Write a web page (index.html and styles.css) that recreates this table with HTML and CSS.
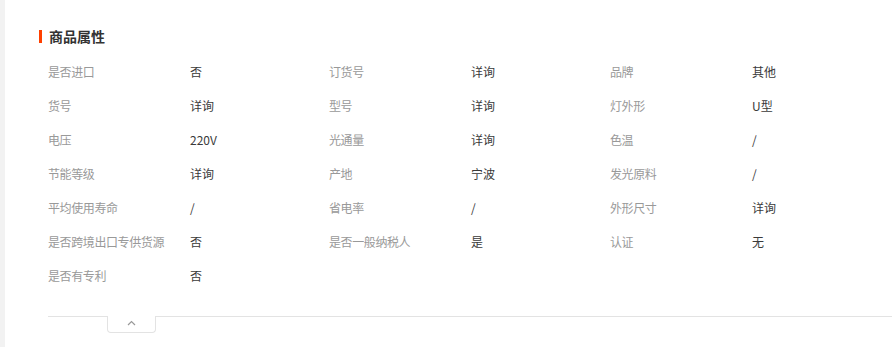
FILE: index.html
```html
<!DOCTYPE html>
<html lang="zh">
<head>
<meta charset="utf-8">
<link rel="stylesheet" href="styles.css">
</head>
<body>
<div class="page">
  <div class="strip"></div>
  <section class="attrs">
    <h2 class="title"><span class="bar"></span>商品属性</h2>
    <div class="grid">
      <div class="k">是否进口</div><div class="v">否</div>
      <div class="k">订货号</div><div class="v">详询</div>
      <div class="k">品牌</div><div class="v">其他</div>

      <div class="k">货号</div><div class="v">详询</div>
      <div class="k">型号</div><div class="v">详询</div>
      <div class="k">灯外形</div><div class="v">U型</div>

      <div class="k">电压</div><div class="v">220V</div>
      <div class="k">光通量</div><div class="v">详询</div>
      <div class="k">色温</div><div class="v">/</div>

      <div class="k">节能等级</div><div class="v">详询</div>
      <div class="k">产地</div><div class="v">宁波</div>
      <div class="k">发光原料</div><div class="v">/</div>

      <div class="k">平均使用寿命</div><div class="v">/</div>
      <div class="k">省电率</div><div class="v">/</div>
      <div class="k">外形尺寸</div><div class="v">详询</div>

      <div class="k">是否跨境出口专供货源</div><div class="v">否</div>
      <div class="k">是否一般纳税人</div><div class="v">是</div>
      <div class="k">认证</div><div class="v">无</div>

      <div class="k">是否有专利</div><div class="v">否</div>
    </div>
    <div class="fold">
      <div class="line short"></div>
      <div class="tab">
        <svg width="9" height="6" viewBox="0 0 9 6"><path d="M1 5 L4.5 1.5 L8 5" fill="none" stroke="#999" stroke-width="1.2"/></svg>
      </div>
      <div class="line"></div>
    </div>
  </section>
</div>
</body>
</html>
```
FILE: styles.css
```css
html, body {
  margin: 0;
  padding: 0;
  background: #fff;
}
body {
  font-family: "Noto Sans CJK SC", "Noto Sans", sans-serif;
  font-size: 12px;
}
.page {
  display: flex;
  min-height: 347px;
}
.strip {
  width: 5px;
  flex: none;
  background: #f2f2f2;
}
.attrs {
  flex: 1;
  padding-left: 34px;
  padding-top: 26px;
}
.title {
  display: flex;
  align-items: center;
  gap: 7px;
  margin: 0;
  height: 20px;
  font-size: 14px;
  font-weight: bold;
  color: #333;
}
.bar {
  width: 3px;
  height: 13px;
  background: #ff4000;
}
.grid {
  margin-top: 8px;
  margin-left: 9px;
  display: grid;
  grid-template-columns: 142px 139px 142px 139px 142px 139px;
  grid-auto-rows: 34px;
  align-items: center;
}
.k {
  color: #999;
  letter-spacing: -0.4px;
}
.v {
  color: #3a3a3a;
}
.fold {
  margin-top: 24px;
  margin-left: 9px;
  display: flex;
  align-items: flex-start;
}
.line {
  flex: 1;
  border-top: 1px solid #e3e3e3;
}
.line.short {
  flex: none;
  width: 59px;
}
.tab {
  width: 47px;
  height: 16px;
  border: 1px solid #e3e3e3;
  border-top: none;
  border-radius: 0 0 4px 4px;
  display: flex;
  justify-content: center;
  align-items: center;
}
.tab svg {
  margin-top: -2px;
}
```
